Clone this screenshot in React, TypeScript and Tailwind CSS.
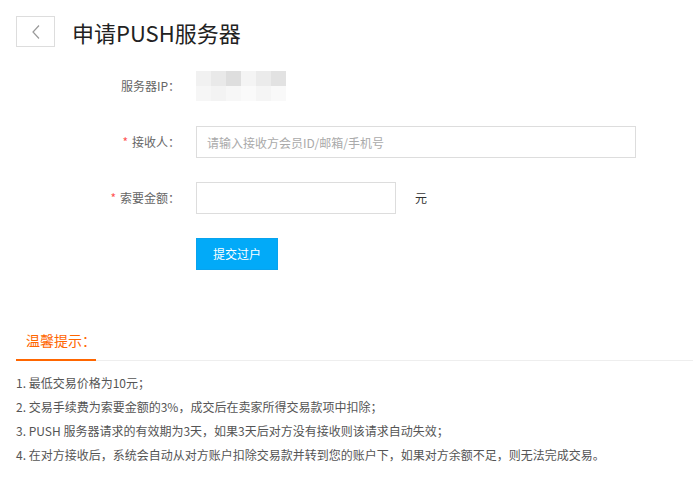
import React from "react";

const blur = [
  ["#f1f1f1", "#e9e9e9", "#dedede", "#f4f4f4", "#ebebeb", "#e2e2e2"],
  ["#f6f6f6", "#f3f3f3", "#f7f7f7", "#fafafa", "#f5f5f5", "#f9f9f9"],
];

function Label({ text, required }: { text: string; required?: boolean }) {
  return (
    <div className="w-[164px] shrink-0 text-right text-[12px] text-[#666]">
      {required && <span className="mr-[4px] text-[#f55]">*</span>}
      {text}
    </div>
  );
}

export default function App() {
  return (
    <div
      className="min-h-[488px] w-[693px] bg-white pl-4 pt-4"
      style={{ fontFamily: '"Noto Sans CJK SC", "Liberation Sans", sans-serif' }}
    >
      {/* Header */}
      <div className="flex items-center">
        <button className="flex h-[31px] w-[39px] items-center justify-center border border-[#ddd] bg-white">
          <svg width="10" height="16" viewBox="0 0 10 16" fill="none">
            <path d="M8 1.5 L2 8 L8 14.5" stroke="#999" strokeWidth="1.2" />
          </svg>
        </button>
        <h1 className="ml-[17px] text-[22px] leading-[30px] text-[#222]">申请PUSH服务器</h1>
      </div>

      {/* Form */}
      <div className="mt-[23px] flex flex-col gap-6">
        <div className="flex h-[32px] items-center">
          <Label text="服务器IP：" />
          <div className="ml-4 grid grid-cols-6">
            {blur.map((row, i) =>
              row.map((c, j) => (
                <div key={`${i}-${j}`} className="h-[15px] w-[15px]" style={{ backgroundColor: c }} />
              ))
            )}
          </div>
        </div>

        <div className="flex h-[32px] items-center">
          <Label text="接收人：" required />
          <input
            className="ml-4 h-[32px] w-[440px] border border-[#ddd] px-[10px] text-[12px] text-[#333] outline-none placeholder:text-[#aaa]"
            placeholder="请输入接收方会员ID/邮箱/手机号"
          />
        </div>

        <div className="flex h-[32px] items-center">
          <Label text="索要金额：" required />
          <input className="ml-4 h-[32px] w-[200px] border border-[#ddd] px-[10px] text-[12px] outline-none" />
          <span className="ml-[19px] text-[12px] text-[#333]">元</span>
        </div>

        <div className="flex h-[32px] items-center">
          <div className="w-[164px] shrink-0" />
          <button className="ml-4 h-[32px] w-[82px] border border-[#08a3ee] bg-[#02aaf8] text-[12px] text-white">
            提交过户
          </button>
        </div>
      </div>

      {/* Tips */}
      <div className="mt-[60px] flex border-b border-[#eee]">
        <div className="-mb-px w-[80px] border-b-2 border-[#ff6600] pb-[9px] pl-[10px] text-[14px] leading-[20px] text-[#ff6600]">
          温馨提示：
        </div>
      </div>
      <div className="mt-[10px] text-[12px] leading-[24px] text-[#555]">
        <p>1. 最低交易价格为10元；</p>
        <p>2. 交易手续费为索要金额的3%，成交后在卖家所得交易款项中扣除；</p>
        <p>3. PUSH 服务器请求的有效期为3天，如果3天后对方没有接收则该请求自动失效；</p>
        <p>4. 在对方接收后，系统会自动从对方账户扣除交易款并转到您的账户下，如果对方余额不足，则无法完成交易。</p>
      </div>
    </div>
  );
}
